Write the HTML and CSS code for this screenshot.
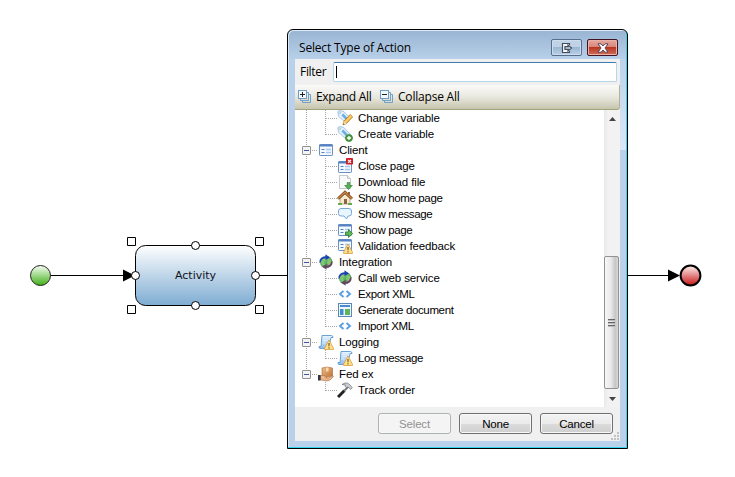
FILE: index.html
```html
<!DOCTYPE html>
<html lang="en">
<head>
<meta charset="utf-8">
<title>Select Type of Action</title>
<link rel="stylesheet" href="styles.css">
</head>
<body>
<svg class="defs" width="0" height="0" aria-hidden="true">
  <defs>
    <linearGradient id="blue" x2="0" y2="1"><stop stop-color="#eaf5ff"/><stop offset="1" stop-color="#8ebcf0"/></linearGradient>
    <linearGradient id="globe" x2="1" y2="1"><stop stop-color="#8cd0f0"/><stop offset=".55" stop-color="#5aae58"/><stop offset="1" stop-color="#80507c"/></linearGradient>
    <linearGradient id="box" x2="1" y2="1"><stop stop-color="#efbd88"/><stop offset="1" stop-color="#bf7438"/></linearGradient>
  </defs>
  <symbol id="tag" viewBox="0 0 16 16">
    <path d="M.8 1.600 2 .7l4.300.400 7.300 7.400-4.200 4.800L1.500 6.300z" fill="#e3f1fc" stroke="#9dbfda" stroke-width=".9"/>
    <path d="m4.500 5.500 1.700-1.900 4.500 4.500-1.900 2z" fill="#69aee5"/>
    <circle cx="2.800" cy="2.800" r=".9" fill="#fff" stroke="#7fa5c2" stroke-width=".5"/>
  </symbol>
  <symbol id="change" viewBox="0 0 16 16"><use href="#tag"/>
    <path d="m6 14.800 1-3.800 6.200-6.500 2.500 2.400-6.300 6.600z" fill="#f6b944" stroke="#b87925" stroke-width=".8"/>
    <path d="m7 11 2.400 2.500L6 14.800z" fill="#f8e2b8"/><path d="m6 14.800.5-1.600 1.100 1z" fill="#4c3520"/><path d="m8.500 12 5.800-6" stroke="#ffe39a"/>
  </symbol>
  <symbol id="create" viewBox="0 0 16 16"><use href="#tag"/>
    <circle cx="12" cy="12" r="3.500" fill="#4d9d3d" stroke="#2f7730" stroke-width=".7"/><path d="M12 10v4M10 12h4" stroke="#fff" stroke-width="1.300"/>
  </symbol>
  <symbol id="form" viewBox="0 0 16 16">
    <rect x="1.500" y="2.500" width="13" height="11" rx=".7" fill="#f5faff" stroke="#698fc3"/>
    <path d="M1.500 3.500h13" stroke="#5580c1" stroke-width="2"/>
    <path d="M3.500 7.500h3M3.500 10.500h3" stroke="#547fcb"/>
    <path d="M8 7.500h5M8 10.500h5" stroke="#a8c8ee" stroke-width="1.500"/>
  </symbol>
  <symbol id="closepage" viewBox="0 0 16 16"><use href="#form" y="1"/>
    <rect x="9" y="0" width="7" height="6.500" rx=".8" fill="#cf1c26"/><path d="m11 1.800 3 3m0-3-3 3" stroke="#fff" stroke-width="1.200"/>
  </symbol>
  <symbol id="download" viewBox="0 0 16 16">
    <path d="M2.500 1.500h8l3 3v10h-11z" fill="#fafafa" stroke="#c6c9ca"/><path d="M10.500 1.500v3h3" fill="#e7e7e7" stroke="#c6c9ca"/>
    <path d="M10.200 8.500h2.600v3h2.500L11.500 15.500l-3.800-4h2.500z" fill="#58ae52" stroke="#36853b" stroke-width=".7"/>
  </symbol>
  <symbol id="home" viewBox="0 0 16 16">
    <path d="M3 8.500V14h10V8.500L8 4z" fill="#f8e9ca" stroke="#a78d66" stroke-width=".7"/>
    <path d="M11 2h2v4h-2z" fill="#9b603b"/><path d="m1 8.800 7-6.600 7 6.600" fill="none" stroke="#784621" stroke-width="2.800"/><path d="m1 8.800 7-6.600 7 6.600" fill="none" stroke="#c98545" stroke-width="1.300"/>
    <path d="M7 9h3v5H7z" fill="#8a6549"/><path d="M1 14h4M11 14h4" stroke="#67a94c" stroke-width="2"/>
  </symbol>
  <symbol id="message" viewBox="0 0 16 16">
    <path d="M4 2.500h8q2.500 0 2.500 2.500v2.500q0 2.500-2.500 2.500h-1l-1.500 3L7 10H4Q1.500 10 1.500 7.500V5Q1.500 2.500 4 2.500z" fill="#eaf6ff" stroke="#75a9d6"/>
  </symbol>
  <symbol id="showpage" viewBox="0 0 16 16"><use href="#form"/>
    <path d="M8.500 10h3V7.500l4.200 4-4.200 4V13h-3z" fill="#60b854" stroke="#29782e" stroke-width=".8"/>
  </symbol>
  <symbol id="warning" viewBox="0 0 16 16">
    <path d="m11 6 4.700 8.700q.3.800-.5.800H6.800q-.8 0-.5-.8z" fill="#ffe18b" stroke="#d99a3c" stroke-width=".8"/><path d="M11 9v3.200M11 13.200v1.300" stroke="#775b2c" stroke-width="1.200"/>
  </symbol>
  <symbol id="validate" viewBox="0 0 16 16"><use href="#form" x="0" y="-1"/><use href="#warning"/></symbol>
  <symbol id="web" viewBox="0 0 16 16">
    <circle cx="8" cy="8" r="6.300" fill="url(#globe)"/>
    <path d="m4 5 3-1 1 2-2 2 1 3-2 1-2-4zM10 5l3 1v4l-2 2-2-3z" fill="#81c96b"/>
    <path d="M1.500 9Q.8 3 7.500 2.500V.3L12 3.500 7.500 6V4.300Q3.500 4.300 3 8z" fill="#243eb7"/>
    <path d="M14.500 7q.8 6-6 6.500v2.200L4.200 12.600 8.500 10v1.700q4 0 4.500-3.700z" fill="#694367"/>
  </symbol>
  <symbol id="xml" viewBox="0 0 16 16"><path d="M6.500 5 3 8l3.500 3M9.500 5 13 8l-3.500 3" fill="none" stroke="#5a9fe0" stroke-width="1.900"/></symbol>
  <symbol id="document" viewBox="0 0 16 16">
    <rect x="1.500" y="1.500" width="13" height="13" fill="#edf6ff" stroke="#5a89b7"/><path d="M3 4h10" stroke="#4b8ad1" stroke-width="2"/><path d="M3 7h3.500v6H3z" fill="#438dcd"/><path d="M8 7h5v6H8z" fill="#61b35c"/>
  </symbol>
  <symbol id="log" viewBox="0 0 16 16">
    <path d="M4 1.500h9.500q1.500 0 1.500 2h-2L10.500 14.500H2q-1.500-.5-1-2h2z" fill="url(#blue)" stroke="#5e98cc" stroke-width=".9"/>
    <path d="M5.500 4h5M5 6.500h5M4.500 9h3" stroke="#d8efff"/><use href="#warning"/>
  </symbol>
  <symbol id="fedex" viewBox="0 0 16 16">
    <path d="m4 2 5-1 5.500 1v8L9 11 4 9.500z" fill="url(#box)" stroke="#a86731" stroke-width=".6"/><path d="M8 1.500h2.500v4H8z" fill="#f8d7ac"/>
    <path d="M2.500 9.500h3l3 1.300q1 1-.8 1.300 3 .5 6.800-2.400 1.500 0 .6 1.200-3.100 4-6.100 4l-6.500-1z" fill="#edb88b" stroke="#a96c46" stroke-width=".6"/><path d="M0 9h2.600v5.500H0z" fill="#303549"/>
  </symbol>
  <symbol id="hammer" viewBox="0 0 16 16">
    <path d="M1 15 7.500 8.500" stroke="#222" stroke-width="3"/><path d="m7 9 4-4" stroke="#777" stroke-width="1.800"/>
    <path d="m5 2.500 3-1.500q3-.4 4.500 1.500l2.800 3.200-1.800 1.600-2.600-2.500-1.400 1L8 4.200l.6-1.200z" fill="#cdd0d2" stroke="#686c70" stroke-width=".7"/>
  </symbol>
  <symbol id="stack" viewBox="0 0 14 14">
    <path d="M4.500 10.500v2h8v-8h-2M2.500 8.500v2h8v-8h-2" fill="none" stroke="#71a0c9"/><rect x=".5" y=".5" width="8" height="8" fill="#f3f8fb" stroke="#6e9cc4"/><path d="M2 4.500h5" stroke="#222"/>
  </symbol>
</svg>

<main class="canvas">
  <svg class="diagram" viewBox="0 0 735 477">
    <defs>
      <linearGradient id="act" x2="0" y2="1"><stop stop-color="#fff"/><stop offset="1" stop-color="#7eacd2"/></linearGradient>
      <linearGradient id="start" x2="0" y2="1"><stop offset=".05" stop-color="#f0faec"/><stop offset="1" stop-color="#3fb016"/></linearGradient>
      <linearGradient id="end" x2="0" y2="1"><stop offset=".1" stop-color="#f9dddd"/><stop offset="1" stop-color="#c91515"/></linearGradient>
    </defs>
    <path d="M50 275.500h75M256 275.500h420" stroke="#000"/>
    <path d="m123 269.500 12 6-12 6zM668 269.500l12 6-12 6z"/>
    <circle cx="40.500" cy="275.500" r="10" fill="url(#start)" stroke="#222"/>
    <circle cx="690.500" cy="275.500" r="9.900" fill="url(#end)" stroke="#000" stroke-width="2"/>
    <rect x="135.500" y="245.500" width="120" height="60" rx="10" fill="url(#act)" stroke="#000"/>
    <g fill="#fff" stroke="#000">
      <circle cx="195.500" cy="245.500" r="4"/><circle cx="195.500" cy="305.500" r="4"/><circle cx="135.500" cy="275.500" r="4"/><circle cx="255.500" cy="275.500" r="4"/>
      <path d="M127.500 237.500h8v8h-8zM255.500 237.500h8v8h-8zM127.500 305.500h8v8h-8zM255.500 305.500h8v8h-8z"/>
    </g>
    <text class="activity" x="175" y="279" textLength="41">Activity</text>
  </svg>

  <section class="dialog">
    <header class="titlebar">
      <h1>Select Type of Action</h1>
      <button class="caption" aria-label="Pop out"><svg width="12" height="12" viewBox="0 0 12 12"><path d="M8.500 3V1.500h-7v9h7V9M4 4.500h3V3l3.500 3L7 9V7.500H4z" fill="#f5f8fb" stroke="#454d5c" stroke-width="1.200"/></svg></button>
      <button class="caption close" aria-label="Close"><svg width="12" height="10" viewBox="0 0 12 10"><path d="M1 .8h3L6 3 8 .8h3L8 5l3 4.200H8L6 7 4 9.200H1L4 5z" fill="#fff" stroke="#55475a"/></svg></button>
    </header>
    <div class="body">
      <div class="filter"><label>Filter</label><div class="input"><i></i></div></div>
      <div class="toolbar">
        <span class="tool expand"><svg width="14" height="14"><use href="#stack"/><path d="M4.500 2v5" stroke="#222"/></svg><b>Expand All</b></span>
        <span class="tool"><svg width="14" height="14"><use href="#stack"/></svg><b>Collapse All</b></span>
      </div>
      <div class="content">
        <ul class="tree">
          <li class="child"><svg><use href="#change"/></svg><span>Change variable</span></li>
          <li class="child last"><svg><use href="#create"/></svg><span>Create variable</span></li>
          <li class="root"><i></i><svg><use href="#form"/></svg><span>Client</span></li>
          <li class="child"><svg><use href="#closepage"/></svg><span>Close page</span></li>
          <li class="child"><svg><use href="#download"/></svg><span>Download file</span></li>
          <li class="child"><svg><use href="#home"/></svg><span class="tight">Show home page</span></li>
          <li class="child"><svg><use href="#message"/></svg><span class="tight">Show message</span></li>
          <li class="child"><svg><use href="#showpage"/></svg><span class="tight">Show page</span></li>
          <li class="child last"><svg><use href="#validate"/></svg><span>Validation feedback</span></li>
          <li class="root"><i></i><svg><use href="#web"/></svg><span>Integration</span></li>
          <li class="child"><svg><use href="#web"/></svg><span>Call web service</span></li>
          <li class="child"><svg><use href="#xml"/></svg><span class="tight">Export XML</span></li>
          <li class="child"><svg><use href="#document"/></svg><span class="tight">Generate document</span></li>
          <li class="child last"><svg><use href="#xml"/></svg><span class="tight">Import XML</span></li>
          <li class="root"><i></i><svg><use href="#log"/></svg><span>Logging</span></li>
          <li class="child last"><svg><use href="#log"/></svg><span class="tight">Log message</span></li>
          <li class="root end"><i></i><svg><use href="#fedex"/></svg><span>Fed ex</span></li>
          <li class="child last final"><svg><use href="#hammer"/></svg><span>Track order</span></li>
        </ul>
        <div class="scrollbar">
          <svg class="arrow" viewBox="0 0 16 17"><path d="m5 11 3.500-4 3.500 4z"/></svg>
          <div class="track"></div>
          <div class="thumb"><i></i><i></i><i></i></div>
          <svg class="arrow" viewBox="0 0 16 17"><path d="m5 8 3.500 4L12 8z"/></svg>
        </div>
      </div>
      <footer>
        <button class="btn" disabled>Select</button><button class="btn">None</button><button class="btn">Cancel</button>
        <svg class="grip" width="8" height="8" viewBox="0 0 8 8"><path d="M6 0h2v2H6zM3 3h2v2H3zM6 3h2v2H6zM0 6h2v2H0zM3 6h2v2H3zM6 6h2v2H6z"/></svg>
      </footer>
    </div>
  </section>
</main>
</body>
</html>
```

FILE: styles.css
```css
* { box-sizing: border-box; }
body { margin: 0; background: #fff; color: #000; font: 11.5px "Liberation Sans", Arial, sans-serif; }
button { font: inherit; padding: 0; }
.defs { position: absolute; }
.canvas { position: relative; width: 735px; height: 477px; overflow: hidden; }
.diagram { display: block; width: 735px; height: 477px; }
.activity { font: 11px "DejaVu Sans", sans-serif; fill: #101020; }

.dialog {
  position: absolute; left: 287px; top: 29px; width: 341px; height: 420px;
  display: flex; flex-direction: column; padding: 0 7px 7px;
  border: 1px solid #000; border-radius: 6px 6px 0 0;
  background:
    linear-gradient(#bdd3ea, #d9e8f8) 100% 29px / 7px 91px no-repeat,
    linear-gradient(#98b4d2, #b9d1ea 30px, #b9d1ea);
  box-shadow: inset -1px -1px #34d3ee, inset 1px 1px #dceaf6;
}
.titlebar { display: flex; height: 29px; align-items: flex-start; padding: 9px 2px 0 4px; }
h1 { flex: 1; margin: 0; font: 12px/18px "Open Sans", sans-serif; letter-spacing: -.18px; white-space: nowrap; }
.caption {
  display: flex; align-items: center; justify-content: center; width: 31px; height: 17px;
  border: 1px solid #596d8c; border-radius: 2px; margin-left: 5px;
  background: linear-gradient(#c0d2e6 48%, #9db7d2 50%, #b8d0e8); box-shadow: inset 0 0 0 1px #cddded;
}
.close { border-color: #431422; background: linear-gradient(#e5a99f, #d88478 48%, #b93720 50%, #ce6e5c); box-shadow: inset 0 0 0 1px #e8b1aa; }

.body { flex: 1; display: flex; flex-direction: column; background: #f0f0f0; min-height: 0; }
.filter { display: flex; height: 26px; padding: 3px 3px 3px 5px; }
.filter label { width: 33px; font: 12px/20px "Open Sans", sans-serif; letter-spacing: -.3px; }
.input { flex: 1; height: 20px; border: 1px solid #b5d5e8; border-top-color: #3d7bad; border-radius: 2px; background: #fff; padding: 3px 2px; }
.input i { display: block; width: 1px; height: 12px; background: #000; }
.toolbar { display: flex; height: 25px; padding-left: 3px; background: linear-gradient(#fafaf8, #e9e8df 50%, #c6c5ae); border-bottom: 1px solid #a5a37c; border-right: 1px solid #b5b396; border-radius: 0 0 3px 0; }
.tool { display: flex; align-items: center; gap: 4px; margin-right: 8px; }
.tool b { font: 12px/22px "Open Sans", sans-serif; letter-spacing: -.2px; white-space: nowrap; }
.expand b { letter-spacing: -.3px; }
.expand { width: 74px; }

.content { display: flex; height: 297px; background: #fff; }
.tree { flex: 1; margin: 0; padding: 0; list-style: none; }
.tree li {
  display: flex; height: 16px; align-items: center; white-space: nowrap;
  --v: repeating-linear-gradient(#a6a6a6 0 1px, transparent 1px 2px);
  --h: repeating-linear-gradient(90deg, #a6a6a6 0 1px, transparent 1px 2px);
  background-repeat: no-repeat;
}
.tree svg { width: 16px; height: 16px; flex: none; }
.tree span { line-height: 16px; letter-spacing: -.13px; }
.tree .tight { letter-spacing: -.36px; }
.child { padding-left: 42px; background-image: var(--v), var(--v), var(--h); background-position: 11px 0, 30px 0, 31px 8px; background-size: 1px 16px, 1px 16px, 11px 1px; }
.child span { margin-left: 5px; }
.child.last { background-size: 1px 16px, 1px 9px, 11px 1px; }
.child.final { background-size: 0 0, 1px 9px, 11px 1px; }
.root { padding-left: 7px; background-image: var(--v), var(--h); background-position: 11px 0, 17px 8px; background-size: 1px 16px, 6px 1px; }
.root.end { background-size: 1px 8px, 6px 1px; }
.root i { width: 9px; height: 9px; margin: 1px 7px 0 0; border: 1px solid #919191; border-radius: 1px; background: linear-gradient(#3e57a0, #3e57a0) 1px 3px / 5px 1px no-repeat #f4f4f4; }
.root span { margin-left: 5px; }

.scrollbar { display: flex; flex-direction: column; width: 16px; background: linear-gradient(90deg, #e8e8e8, #f2f2f2 4px); }
.arrow { width: 16px; height: 17px; fill: #454545; }
.track { height: 129px; }
.thumb { display: flex; flex-direction: column; align-items: center; justify-content: center; gap: 1px; width: 15px; height: 133px; border: 1px solid #929292; border-radius: 2px; background: linear-gradient(90deg, #f7f7f7, #e9e9e9 45%, #c6c6c8 80%, #d9d9d9); }
.thumb i { width: 7px; height: 2px; background: linear-gradient(#666 1px, #bbb 1px); }

footer { position: relative; flex: 1; display: flex; justify-content: flex-end; gap: 8px; padding: 6px 7px 0 0; }
.btn { width: 73px; height: 21px; border: 1px solid #707070; border-radius: 3px; color: #000; background: linear-gradient(#f3f3f3, #ebebeb 50%, #dcdcdc 50%, #cfcfcf); box-shadow: inset 0 0 0 1px #f8f8f8; line-height: 18px; letter-spacing: -.2px; }
.btn:disabled { border-color: #adb2b5; color: #929292; background: #f4f4f4; }
.grip { position: absolute; right: 1px; bottom: 1px; fill: #c2c2c2; }
```
